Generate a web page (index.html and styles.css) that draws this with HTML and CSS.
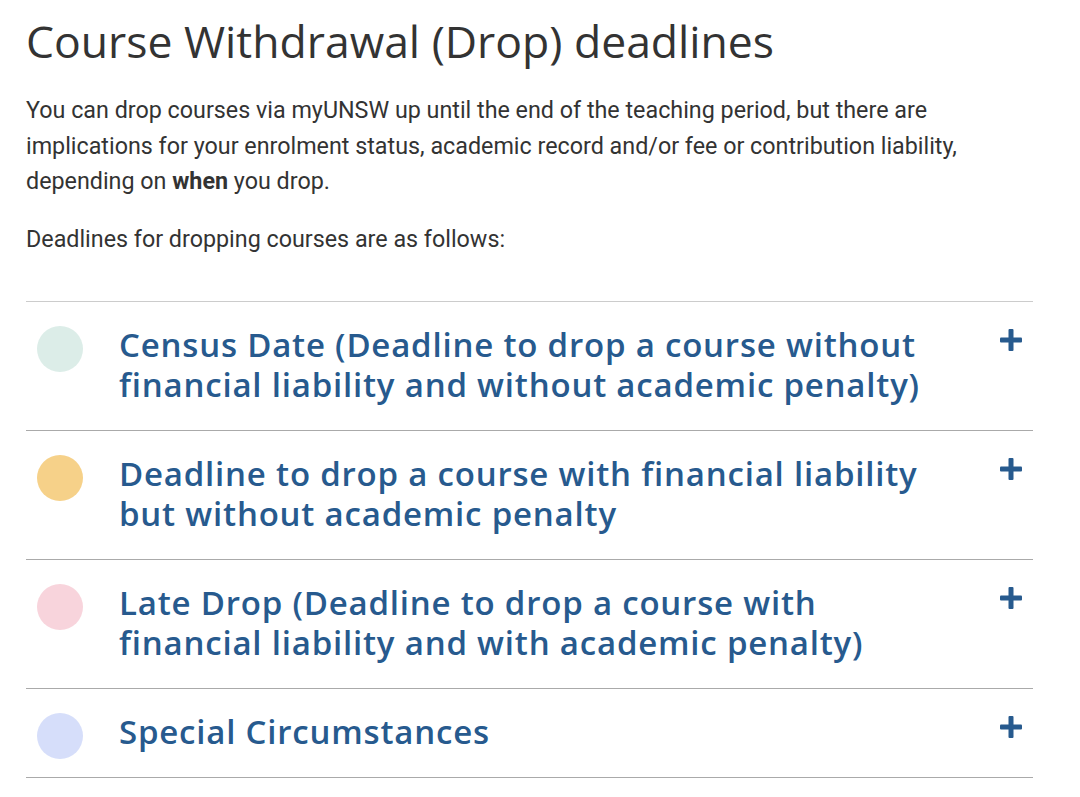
FILE: index.html
```html
<!DOCTYPE html>
<html lang="en">
<head>
  <meta charset="UTF-8" />
  <title>Course Withdrawal (Drop) deadlines</title>
  <link rel="stylesheet" href="styles.css">
</head>
<body>
  <div class="page">
    <h1>Course Withdrawal (Drop) deadlines</h1>

    <p>You can drop courses via myUNSW up until the end of the teaching period, but there are implications for your enrolment status, academic record and/or fee or contribution liability, depending on <strong>when</strong> you drop.</p>

    <p>Deadlines for dropping courses are as follows:</p>

    <div class="accordion">
      <div class="acc-item">
        <span class="dot dot-census"></span>
        <h3 class="acc-title">Census Date (Deadline to drop a course without financial liability and without academic penalty)</h3>
        <span class="plus"><svg width="22" height="22" viewBox="0 0 22 22"><rect x="8.5" y="0" width="5" height="22" rx="1"/><rect x="0" y="8.5" width="22" height="5" rx="1"/></svg></span>
      </div>
      <div class="acc-item">
        <span class="dot dot-fin"></span>
        <h3 class="acc-title">Deadline to drop a course with financial liability but without academic penalty</h3>
        <span class="plus"><svg width="22" height="22" viewBox="0 0 22 22"><rect x="8.5" y="0" width="5" height="22" rx="1"/><rect x="0" y="8.5" width="22" height="5" rx="1"/></svg></span>
      </div>
      <div class="acc-item">
        <span class="dot dot-late"></span>
        <h3 class="acc-title">Late Drop (Deadline to drop a course with financial liability and with academic penalty)</h3>
        <span class="plus"><svg width="22" height="22" viewBox="0 0 22 22"><rect x="8.5" y="0" width="5" height="22" rx="1"/><rect x="0" y="8.5" width="22" height="5" rx="1"/></svg></span>
      </div>
      <div class="acc-item">
        <span class="dot dot-special"></span>
        <h3 class="acc-title">Special Circumstances</h3>
        <span class="plus"><svg width="22" height="22" viewBox="0 0 22 22"><rect x="8.5" y="0" width="5" height="22" rx="1"/><rect x="0" y="8.5" width="22" height="5" rx="1"/></svg></span>
      </div>
    </div>
  </div>
</body>
</html>
```

FILE: styles.css
```css
body {
  margin: 0;
  background: #fff;
  color: #333;
  font-family: Roboto, "Liberation Sans", sans-serif;
}

.page {
  width: 1007px;
  padding: 14px 0 0 26px;
}

h1 {
  font-family: "Open Sans", Lato, sans-serif;
  font-weight: 500;
  font-size: 44.5px;
  line-height: 54px;
  margin: 0 0 25px;
  color: #333;
}

p {
  font-size: 23.3px;
  line-height: 35.5px;
  margin: 0 0 22px;
}

p strong {
  font-weight: bold;
}

.accordion {
  margin-top: 44px;
  border-top: 1px solid #ccc;
}

.acc-item {
  display: flex;
  align-items: flex-start;
  padding: 23px 11px 25px 11px;
  border-bottom: 1px solid #aaa;
}

.dot {
  flex: none;
  width: 46px;
  height: 46px;
  border-radius: 50%;
  margin: 1px 36px -10px 0;
}

.dot-census { background: #dcede8; }
.dot-fin { background: #f6d189; }
.dot-late { background: #f8d4dc; }
.dot-special { background: #d6defa; }

.acc-title {
  flex: 1;
  margin: 0;
  font-family: "Open Sans", Lato, sans-serif;
  font-weight: 560;
  font-size: 33px;
  letter-spacing: 0.8px;
  line-height: 40px;
  color: #275a8e;
  padding-right: 45px;
}

.plus {
  flex: none;
  margin-top: 4px;
}

.plus svg {
  display: block;
  fill: #275a8e;
}
```
